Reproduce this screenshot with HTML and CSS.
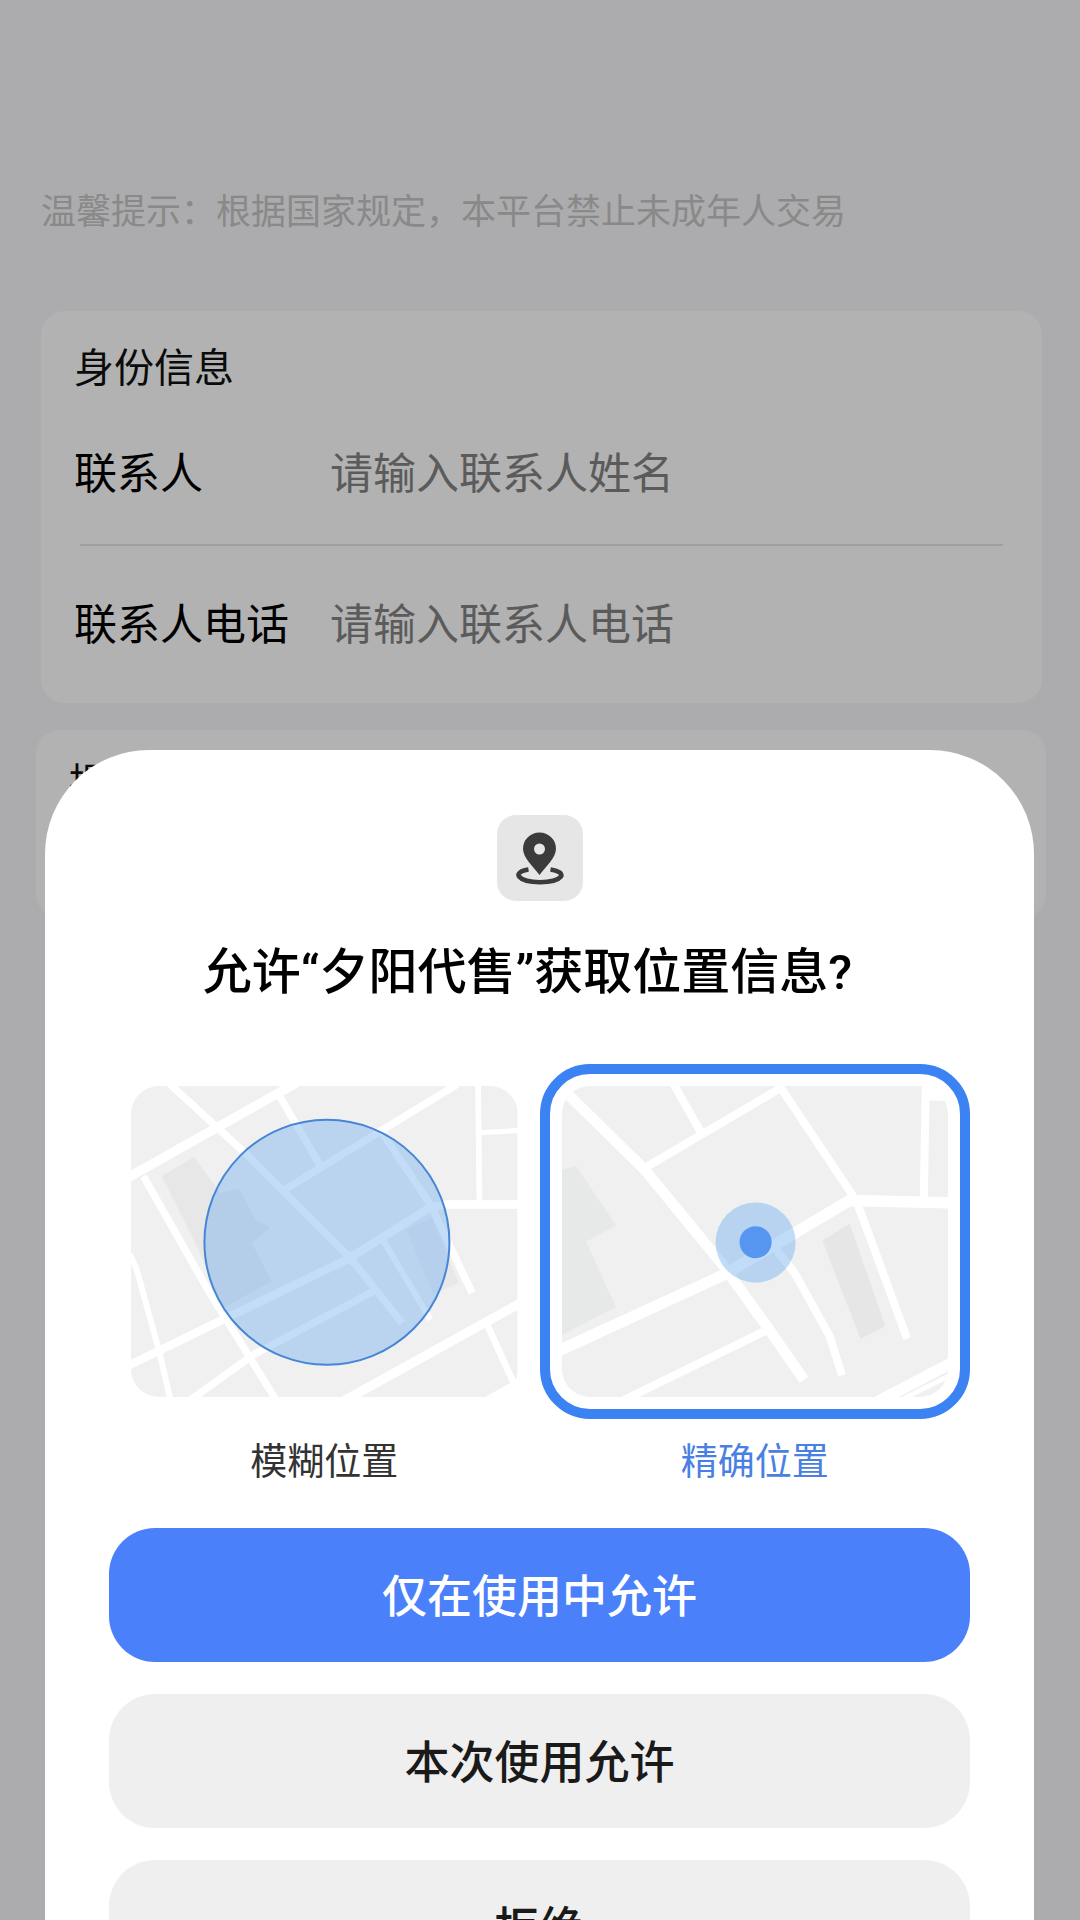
FILE: index.html
```html
<!DOCTYPE html>
<html lang="zh-CN">

<head>
    <meta charset="UTF-8">
    <meta name="viewport" content="width=device-width, initial-scale=1.0">
    <title>身份信息</title>
    <link rel="stylesheet" href="styles.css">
</head>

<body>
    <main class="page">
        <p class="tip">温馨提示：根据国家规定，本平台禁止未成年人交易</p>
        <form class="card">
            <h2 class="card-title">身份信息</h2>
            <div class="row">
                <label for="name">联系人</label>
                <input id="name" type="text" placeholder="请输入联系人姓名">
            </div>
            <hr class="line">
            <div class="row">
                <label for="phone">联系人电话</label>
                <input id="phone" type="tel" placeholder="请输入联系人电话">
            </div>
        </form>
        <section class="card card-wide">
            <h2 class="card-title">提</h2>
        </section>
    </main>

    <!-- 位置权限弹窗 -->
    <div class="mask">
        <div class="sheet" role="dialog" aria-labelledby="title">
            <svg class="icon" viewBox="0 0 86 86">
                <rect width="86" height="86" rx="19" fill="#e6e6e6" />
                <path d="M42.500 60C36 51 26 43 26 33.500a16.500 16 0 0 1 33 0C59 43 49 51 42.500 60z" fill="#3b3b3b" />
                <circle cx="42.500" cy="34" r="5.500" fill="#e6e6e6" />
                <path d="M31.500 54.500C24 55.500 20 58.500 22 61.500C28 69 58 69 64 61.500C66 58.500 61 55.500 53.500 54.500" fill="none" stroke="#3b3b3b" stroke-width="4.500" />
            </svg>
            <h1 class="title" id="title">允许“夕阳代售”获取位置信息?</h1>

            <div class="options">
                <label class="option">
                    <input type="radio" name="accuracy">
                    <span class="frame">
                        <svg class="map" viewBox="63 75 1158 933">
                            <rect x="63" y="75" width="1158" height="933" fill="#f0f0f0" />
                            <path d="M155 345L252 288L330 395L388 384L435 475L480 500L425 545L485 660L340 740L262 560z" fill="#e7e7e7" />
                            <path d="M888 505L965 470L1045 665L968 700z" fill="#e8e8ea" />
                            <g fill="none" stroke="#fff" stroke-width="22">
                                <path d="M40 357L560 65" stroke-width="28" />
                                <path d="M180 70L420 290L720 590L875 785" />
                                <path d="M508 105L628 310" />
                                <path d="M525 385L1040 70" />
                                <path d="M815 215L960 430L1085 695" />
                                <path d="M40 920L370 760L710 595L960 438L1010 430L1230 430" stroke-width="25" />
                                <path d="M1103 70L1107 430" stroke-width="17" />
                                <path d="M1110 215L1230 208" stroke-width="15" />
                                <path d="M100 345L290 680L500 1020" />
                                <path d="M60 580L80 625L150 880L182 1020" stroke-width="18" />
                                <path d="M235 1020L430 880L790 690" />
                                <path d="M820 540L960 775" stroke-width="18" />
                                <path d="M680 1030L1230 725" stroke-width="28" />
                                <path d="M1130 790L1212 970L1130 1015" stroke-width="20" />
                            </g>
                            <path d="M1140 1010L1225 960V1010z" fill="#fff" />
                            <circle cx="650" cy="543" r="367" fill="#69abf0" fill-opacity=".4" stroke="#4785d6" stroke-width="6" />
                        </svg>
                    </span>
                    <span class="name">模糊位置</span>
                </label>
                <label class="option">
                    <input type="radio" name="accuracy" checked>
                    <span class="frame">
                        <svg class="map" viewBox="123 105 1158 933">
                            <rect x="123" y="105" width="1158" height="933" fill="#f0f0f0" />
                            <path d="M123 355L165 345L285 522L195 572L285 768L123 850z" fill="#e7e8e8" />
                            <path d="M903 568L985 518L1092 825L1017 862z" fill="#e6e6e7" />
                            <g fill="none" stroke="#fff" stroke-width="24">
                                <path d="M120 110L370 355L600 635L740 830L848 985" stroke-width="32" />
                                <path d="M455 95L540 245" />
                                <path d="M372 350L780 110" />
                                <path d="M775 105L1005 450L1050 570L1157 862" />
                                <path d="M110 900L610 670L985 448L1290 455" stroke-width="34" />
                                <path d="M1213 100L1207 440" />
                                <path d="M1210 130H1290" stroke-width="38" />
                                <path d="M760 590L820 665L925 855L962 972" />
                                <path d="M300 1050L740 835" />
                                <path d="M1060 1055L1290 935" stroke-width="34" />
                                <path d="M1130 1050L1290 970" stroke-width="14" />
                            </g>
                            <circle cx="703" cy="574" r="120" fill="#69abf0" fill-opacity=".42" />
                            <circle cx="703" cy="573" r="48" fill="#5696f0" />
                        </svg>
                    </span>
                    <span class="name">精确位置</span>
                </label>
            </div>

            <div class="buttons">
                <button class="btn primary" type="button">仅在使用中允许</button>
                <button class="btn" type="button">本次使用允许</button>
                <button class="btn" type="button">拒绝</button>
            </div>
        </div>
    </div>
</body>

</html>
```
FILE: styles.css
```css
*{margin:0;padding:0;box-sizing:border-box;}
body{height:100vh;overflow:hidden;background:#f7f7fa;color:#000;font-family:"Noto Sans CJK SC",sans-serif;}
.page{padding:184px 34px 0 36px;}
.tip{padding:0 5px;font-size:35px;line-height:50px;color:#c4c4c4;}
.card{margin:77px 4px 0 5px;padding:24px 33px 8px;background:#fff;border-radius:24px;}
.card-wide{margin:27px 0 0;height:188px;padding-top:20px;}
.card-title{font-size:40px;line-height:60px;font-weight:400;color:#111;}
.row{display:flex;align-items:center;height:149px;font-size:43px;line-height:60px;}
.row label{width:256px;flex:none;}
.row input{flex:1;min-width:0;border:0;outline:0;background:none;font:inherit;}
.row input::placeholder{color:#838383;opacity:1;}
.line{height:2px;margin:0 6px;border:0;background:#e4e4e4;}

.mask{position:fixed;inset:0;overflow:hidden;padding:750px 46px 0 45px;background:rgba(0,0,0,.3);}
.sheet{padding:65px 64px 64px;background:#fff;border-radius:104px 104px 0 0;}
.icon{display:block;width:86px;height:86px;margin:0 auto;}
.title{margin-top:37px;padding-right:24px;font-family:Roboto,"Noto Sans CJK SC",sans-serif;font-size:49px;line-height:70px;font-weight:500;text-align:center;}

.options{display:grid;grid-template-columns:1fr 1fr;margin-top:56px;}
.option{position:relative;text-align:center;color:#333;cursor:pointer;}
.option input{position:absolute;opacity:0;}
.frame{display:block;padding:12px;border:10px solid transparent;border-radius:50px;}
.map{display:block;width:100%;border-radius:28px;}
.name{display:block;margin-top:10px;font-size:37px;line-height:60px;}
.option input:checked + .frame{border-color:#3b82f3;}
.option input:checked ~ .name{color:#4a80e4;}

.buttons{display:grid;gap:32px;margin-top:39px;}
.btn{height:134px;padding-bottom:4px;border:0;border-radius:46px;background:#efefef;color:#1a1a1a;font-family:inherit;font-size:45px;font-weight:500;cursor:pointer;}
.primary{background:#4a80f9;color:#fff;}
```
